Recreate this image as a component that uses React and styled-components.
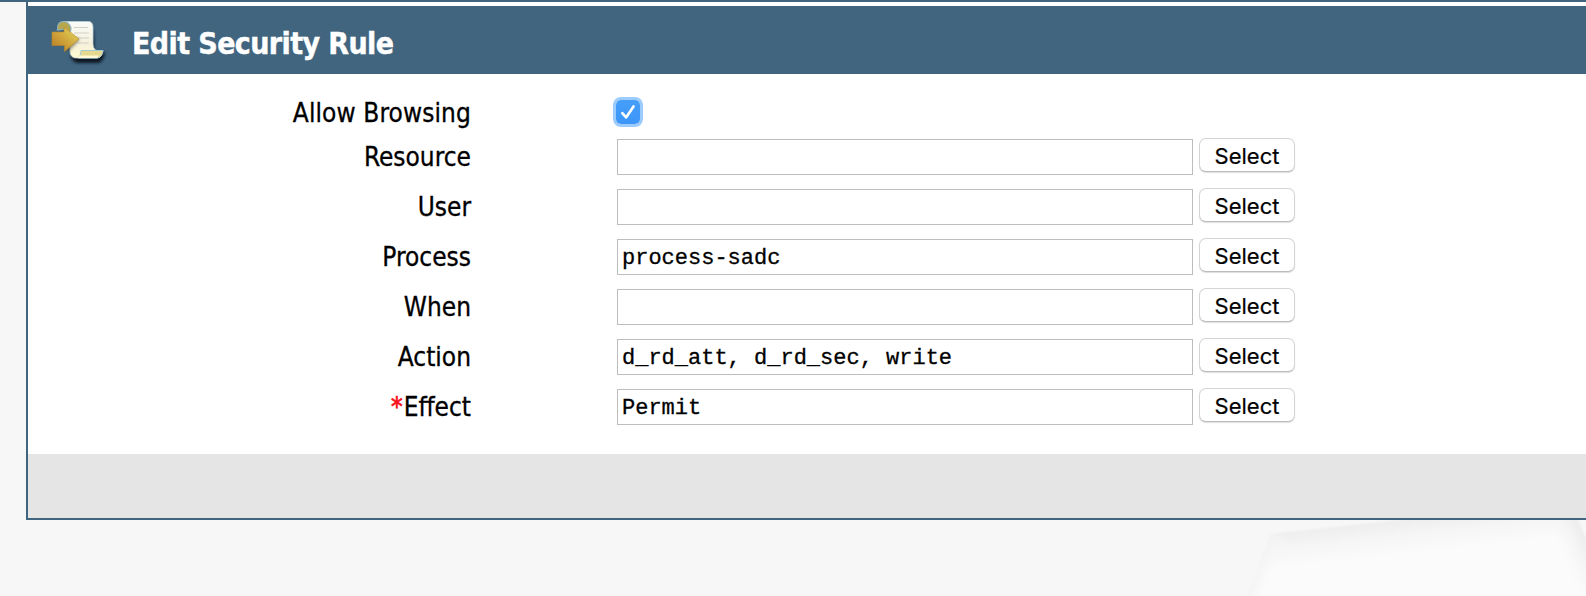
import React from 'react';
import styled, { createGlobalStyle } from 'styled-components';

const GlobalStyle = createGlobalStyle`
  *, *::before, *::after { box-sizing: border-box; }
  body {
    margin: 0;
    overflow: hidden;
    background: #f7f7f7;
    color: #000;
    font-family: "DejaVu Sans Condensed", "DejaVu Sans", sans-serif;
    font-stretch: condensed;
  }
`;

const Page = styled.div`
  position: relative;
  height: 596px;
  overflow: hidden;
  border-top: 2px solid #41657f;
`;

const Backdrop = styled.svg`
  position: absolute;
  right: 0;
  bottom: 0;
  width: 380px;
  height: 76px;
`;

const Panel = styled.main`
  position: relative;
  margin-left: 26px;
  height: 518px;
  padding-top: 4px;
  display: flex;
  flex-direction: column;
  background: #fff;
  border-left: 2px solid #41657f;
  border-bottom: 2px solid #41657f;
`;

const Header = styled.header`
  flex: none;
  height: 68px;
  padding-left: 12px;
  display: flex;
  align-items: center;
  background: #41657f;
`;

const RuleIcon = styled.svg`
  flex: none;
  width: 80px;
  height: 60px;
`;

const Title = styled.h1`
  margin: 8px 0 0 12px;
  font-size: 30px;
  line-height: 36px;
  font-weight: 700;
  letter-spacing: -0.6px;
  -webkit-text-stroke: 0.4px #fff;
  color: #fff;
  white-space: nowrap;
`;

const Form = styled.form`
  flex: 1;
  padding-top: 20px;
`;

const Row = styled.div`
  display: grid;
  grid-template-columns: 444px 576px 96px;
  align-items: start;
  height: ${({ $compact }) => ($compact ? '44px' : '50px')};
`;

const Label = styled.label`
  padding: 3px 1px 0 0;
  font-size: 26px;
  line-height: 32px;
  letter-spacing: ${({ $tracking = 0 }) => $tracking}px;
  -webkit-text-stroke: 0.3px currentColor;
  text-align: right;
  white-space: nowrap;
`;

const Required = styled.span`
  color: #fb0d1b;
  margin-right: 1px;
  -webkit-text-stroke: 0.7px #fb0d1b;
`;

const CheckCell = styled.div`
  grid-column: 2;
  padding: 6px 0 0 144px;
  width: 200px;
`;

const Checkbox = styled.span`
  display: flex;
  width: 24px;
  height: 24px;
  border-radius: 5px;
  background: linear-gradient(#459ef9, #3c96f8);
  box-shadow: 0 0 0 3px #9dcbfb;
`;

const Field = styled.input`
  display: block;
  width: 576px;
  height: 36px;
  margin: 1px 0 0 145px;
  padding: 2px 4px 0;
  border: 1px solid #bdbdbd;
  border-radius: 0;
  outline: 0;
  background: #fff;
  color: #000;
  font: 22px/30px "Liberation Mono", monospace;
  -webkit-text-stroke: 0.3px #000;
`;

const SelectButton = styled.button`
  width: 96px;
  height: 34px;
  margin-left: 151px;
  padding: 2px 0 0;
  border: 1px solid #d4d4d4;
  border-bottom-color: #bcbcbc;
  border-radius: 7px;
  background: #fff;
  box-shadow: 0 1px 1px #dedede;
  color: #000;
  font: 22px/30px Inter, sans-serif;
  -webkit-text-stroke: 0.2px #000;
`;

const Footer = styled.footer`
  flex: none;
  height: 64px;
  background: #e5e5e5;
`;

const fields = [
  { label: 'Resource', value: '' },
  { label: 'User', value: '' },
  { label: 'Process', value: 'process-sadc' },
  { label: 'When', value: '' },
  { label: 'Action', value: 'd_rd_att, d_rd_sec, write' },
  { label: 'Effect', value: 'Permit', required: true },
];

function ScrollIcon() {
  return (
    <RuleIcon viewBox="0 0 80 60" aria-hidden="true">
      <defs>
        <linearGradient id="arrow" x1="0" y1="1" x2="1" y2="0">
          <stop offset="0" stopColor="#b87524" />
          <stop offset="0.45" stopColor="#cfa33a" />
          <stop offset="1" stopColor="#e5dc60" />
        </linearGradient>
        <linearGradient id="paper" x1="0" y1="0" x2="0" y2="1">
          <stop offset="0" stopColor="#fbfcf8" />
          <stop offset="0.6" stopColor="#f5f1dc" />
          <stop offset="1" stopColor="#fffbd0" />
        </linearGradient>
        <filter id="shade" x="-30%" y="-30%" width="160%" height="170%">
          <feGaussianBlur stdDeviation="1.4" />
        </filter>
      </defs>
      <path d="M30 45Q33 53 38 53H59Q64 51 65 42L54 43V17L50 43Z" fill="#0c1922" filter="url(#shade)" />
      <path d="M22 11.5H49Q53 12 53 18V34Q53 38 56 40.5H63Q62 48 57 48H35Q30 47 30 41V19Z" fill="url(#paper)" stroke="#bcd1d3" strokeWidth=".8" />
      <path d="M17.5 20Q17 12 23 11.5Q29 11.5 31 18L30 25L25 19Z" fill="#b6a64c" stroke="#91b3bd" strokeWidth="1.2" />
      <path d="M41 40.5H63Q62 47.5 57 48H38Q41 46 41 40.5Z" fill="#e4d98f" stroke="#a8cbd1" strokeWidth="1" />
      <path d="M40 45.5H59L57 48H37Z" fill="#fffad2" />
      <path d="M34 17.5H48M34 23H49M38 28H49M37 33H49" stroke="#d1d0c7" strokeWidth="1.2" />
      <path d="M27 43L39.5 30L37 27L26 37Z" fill="#575233" opacity=".6" filter="url(#shade)" />
      <path d="M12 22H24V17L39 29L24.5 41.5V35.5H12Z" fill="url(#arrow)" stroke="#ba862a" strokeWidth=".6" />
    </RuleIcon>
  );
}

function CheckMark() {
  return (
    <svg width="24" height="24" viewBox="0 0 24 24" aria-hidden="true">
      <path d="M6.3 13.2L10.1 17.4L17.5 6.4" fill="none" stroke="#fff" strokeWidth="2.6" strokeLinecap="round" strokeLinejoin="round" />
    </svg>
  );
}

function BackgroundShape() {
  return (
    <Backdrop viewBox="0 0 380 76" aria-hidden="true">
      <defs>
        <linearGradient id="plane" gradientUnits="userSpaceOnUse" x1="170" y1="1" x2="174" y2="38">
          <stop offset="0" stopColor="#ededed" />
          <stop offset="0.5" stopColor="#f6f6f6" />
          <stop offset="1" stopColor="#fbfbfb" />
        </linearGradient>
        <linearGradient id="leftEdge" gradientUnits="userSpaceOnUse" x1="48" y1="48" x2="70" y2="56">
          <stop offset="0" stopColor="#f1f1f1" />
          <stop offset="1" stopColor="#fbfbfb" stopOpacity="0" />
        </linearGradient>
        <linearGradient id="rightEdge" gradientUnits="userSpaceOnUse" x1="384" y1="20" x2="350" y2="34">
          <stop offset="0" stopColor="#e9e9e9" />
          <stop offset="1" stopColor="#fbfbfb" stopOpacity="0" />
        </linearGradient>
        <filter id="soften" x="-10%" y="-20%" width="120%" height="140%">
          <feGaussianBlur stdDeviation="1.3" />
        </filter>
      </defs>
      <g filter="url(#soften)">
        <path d="M65 14L210 -2L371 -6L395 50V90H35Z" fill="url(#plane)" />
        <path d="M65 14L90 18V90H35Z" fill="url(#leftEdge)" />
        <path d="M330 -6H369L395 50V90H330Z" fill="url(#rightEdge)" />
      </g>
    </Backdrop>
  );
}

export default function App() {
  return (
    <>
      <GlobalStyle />
      <Page>
        <BackgroundShape />
        <Panel>
          <Header>
            <ScrollIcon />
            <Title>Edit Security Rule</Title>
          </Header>
          <Form>
            <Row $compact>
              <Label $tracking={0.1}>Allow Browsing</Label>
              <CheckCell>
                <Checkbox role="checkbox" aria-checked="true" aria-label="Allow Browsing">
                  <CheckMark />
                </Checkbox>
              </CheckCell>
            </Row>
            {fields.map(({ label, value, required }) => (
              <Row key={label}>
                <Label>
                  {required && <Required>*</Required>}
                  {label}
                </Label>
                <Field defaultValue={value} aria-label={label} />
                <SelectButton type="button">Select</SelectButton>
              </Row>
            ))}
          </Form>
          <Footer />
        </Panel>
      </Page>
    </>
  );
}
